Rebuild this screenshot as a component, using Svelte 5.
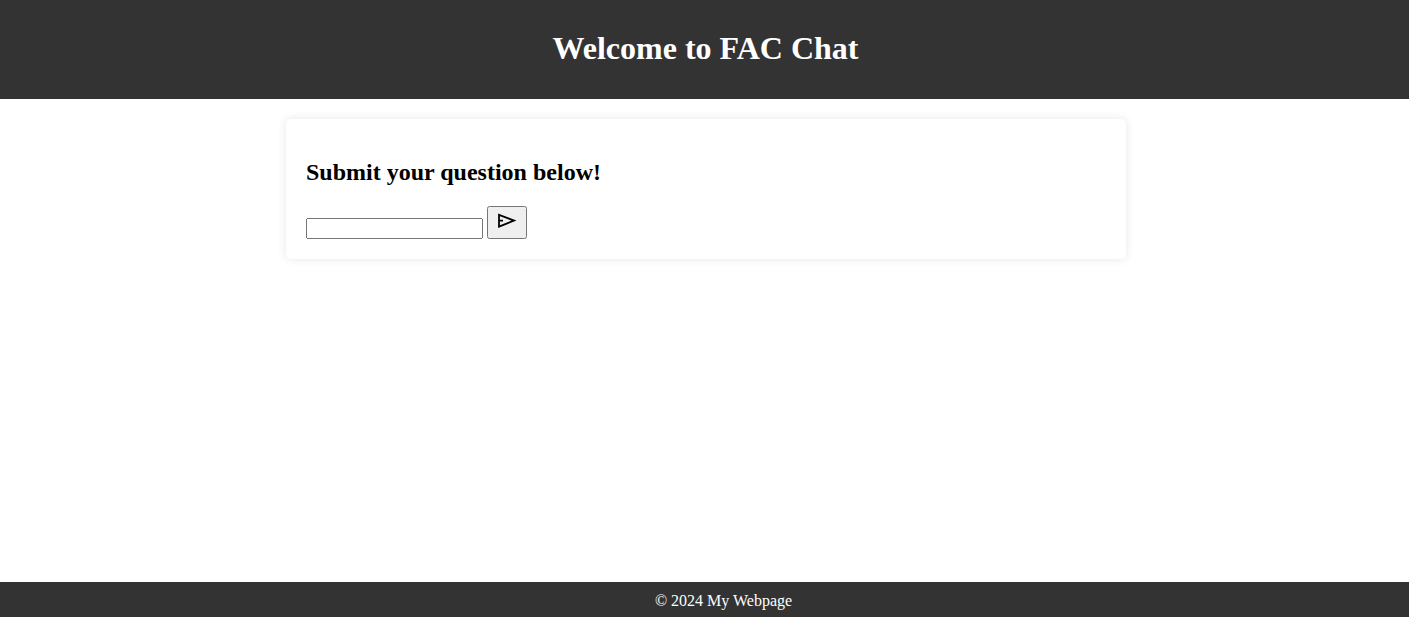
<script>
	let question = $state('');
</script>

<div class="page">
	<header>
		<h1>Welcome to FAC Chat</h1>
	</header>
	<main>
		<section class="card">
			<h2>Submit your question below!</h2>
			<form onsubmit={(e) => e.preventDefault()}>
				<input type="text" bind:value={question} />
				<button type="submit" aria-label="Send">
					<svg width="20" height="20" viewBox="0 0 20 20" fill="none" stroke="#000" stroke-width="1.8" stroke-linejoin="miter">
						<path d="M2 1.8 L17 7.6 L2 13.6 Z M2 7.6 H6" />
					</svg>
				</button>
			</form>
		</section>
	</main>
	<footer>© 2024 My Webpage</footer>
</div>

<style>
	:global(body) {
		background: #fff;
		font-family: 'Liberation Serif', 'Times New Roman', serif;
	}
	.page {
		min-height: 617px;
		display: flex;
		flex-direction: column;
	}
	header {
		background: #333;
		color: #fff;
		padding: 22px 20px 24px 22px;
		text-align: center;
	}
	h1 {
		margin: 0;
		padding: 8px 0;
		font-size: 32px;
		line-height: 37px;
		font-weight: bold;
	}
	main {
		flex: 1;
		padding: 20px 0;
	}
	.card {
		width: 800px;
		margin: 0 auto 0 286px;
		padding: 20px;
		background: #fff;
		border-radius: 5px;
		box-shadow: 0 0 10px rgba(0, 0, 0, 0.1);
	}
	h2 {
		margin: 20px 0;
		font-size: 24px;
		line-height: 27px;
	}
	input {
		width: 177px;
		box-sizing: border-box;
		font-size: 13.33px;
	}
	button {
		width: 40px;
		height: 33px;
		padding: 0;
		vertical-align: bottom;
	}
	svg {
		display: block;
		margin: 0 auto;
	}
	footer {
		background: #333;
		color: #fff;
		text-align: center;
		padding: 11px 10px 9px 48px;
		line-height: 15px;
		font-size: 16px;
	}
</style>
